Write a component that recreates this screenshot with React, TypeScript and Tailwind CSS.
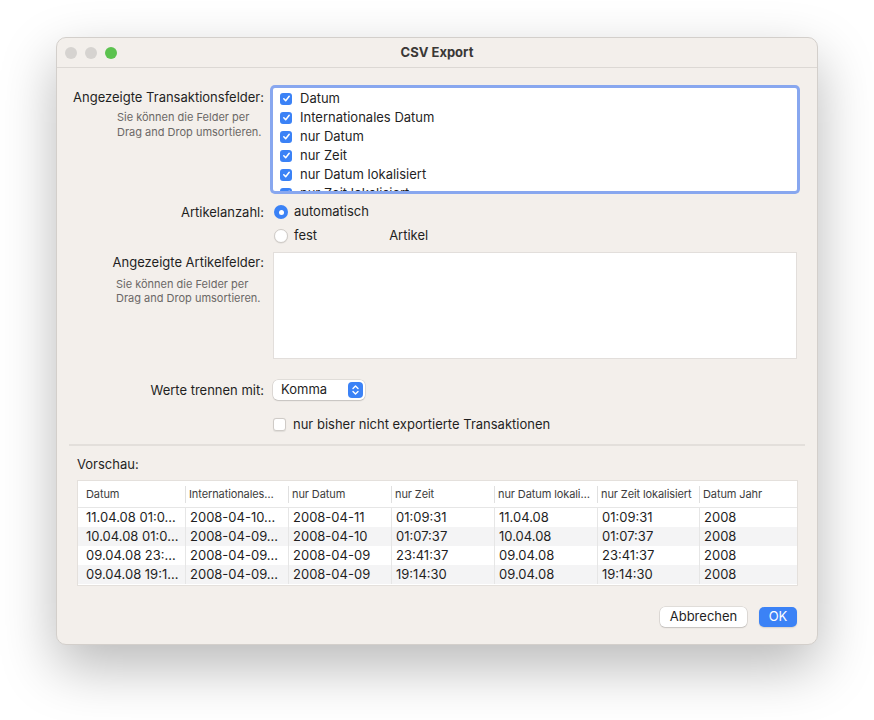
import React from 'react';

const font = { fontFamily: 'Inter, "Noto Sans", "Liberation Sans", sans-serif' };

const fields = [
  'Datum',
  'Internationales Datum',
  'nur Datum',
  'nur Zeit',
  'nur Datum lokalisiert',
  'nur Zeit lokalisiert',
];

// column titles as they appear, already shortened by the table view
const columns = [
  { title: 'Datum', w: 'w-[107px] pl-[8px]' },
  { title: 'Internationales…', w: 'w-[103px] pl-[4px]' },
  { title: 'nur Datum', w: 'w-[103px] pl-[4px]' },
  { title: 'nur Zeit', w: 'w-[103px] pl-[4px]' },
  { title: 'nur Datum lokali…', w: 'w-[103px] pl-[4px]' },
  { title: 'nur Zeit lokalisiert', w: 'w-[102px] pl-[4px]' },
  { title: 'Datum Jahr', w: 'w-[99px] pl-[4px]' },
];

const rows = [
  ['11.04.08 01:0…', '2008-04-10…', '2008-04-11', '01:09:31', '11.04.08', '01:09:31', '2008'],
  ['10.04.08 01:0…', '2008-04-09…', '2008-04-10', '01:07:37', '10.04.08', '01:07:37', '2008'],
  ['09.04.08 23:…', '2008-04-09…', '2008-04-09', '23:41:37', '09.04.08', '23:41:37', '2008'],
  ['09.04.08 19:1…', '2008-04-09…', '2008-04-09', '19:14:30', '09.04.08', '19:14:30', '2008'],
];

function CheckBlue() {
  return (
    <span className="flex h-[12px] w-[12px] shrink-0 items-center justify-center rounded-[3px] bg-[#3b82f6]">
      <svg width="9" height="9" viewBox="0 0 10 10" fill="none">
        <path d="M2 5.3 L4.1 7.4 L8 2.6" stroke="white" strokeWidth="1.7" strokeLinecap="round" strokeLinejoin="round" />
      </svg>
    </span>
  );
}

function Label({ children }: { children: React.ReactNode }) {
  return <div className="flex justify-end whitespace-nowrap leading-[16px]">{children}</div>;
}

export default function App() {
  return (
    <div className="min-h-screen bg-white pl-[56px] pt-[37px] text-[13px] text-[#1f1f1f]" style={font}>
      <div className="flex h-[608px] w-[762px] flex-col overflow-hidden rounded-[10px] border border-[#d3cfcb] bg-[#f3efeb] shadow-[0_22px_55px_rgba(0,0,0,0.28)]">
        {/* title bar */}
        <div className="relative flex h-[30px] shrink-0 items-center border-b border-[#dcd8d4] px-[8px]">
          <div className="flex gap-[8px]">
            <span className="h-[12px] w-[12px] rounded-full bg-[#d6d3d0]" />
            <span className="h-[12px] w-[12px] rounded-full bg-[#d6d3d0]" />
            <span className="h-[12px] w-[12px] rounded-full bg-[#5cc24f]" />
          </div>
          <div className="absolute inset-0 flex items-center justify-center text-[13px] font-bold text-[#3a3836]">
            CSV Export
          </div>
        </div>

        <div className="flex flex-1 flex-col px-[20px] pt-[20px]">
          {/* Transaktionsfelder */}
          <div className="flex gap-[9px]">
            <div className="w-[187px] shrink-0 pt-[1px]">
              <Label>Angezeigte Transaktionsfelder:</Label>
              <div className="mt-[5px] whitespace-nowrap pl-[40px] text-left text-[11px] leading-[15px] text-[#6b6866]">
                Sie können die Felder per
                <br />
                Drag and Drop umsortieren.
              </div>
            </div>
            <div className="h-[103px] w-[525px] overflow-hidden rounded-[2px] bg-white ring-[3px] ring-[#88a7ef]">
              <div className="pt-[1px]">
                {fields.map((f) => (
                  <div key={f} className="flex h-[19px] items-center gap-[8px] pl-[7px]">
                    <CheckBlue />
                    <span>{f}</span>
                  </div>
                ))}
              </div>
            </div>
          </div>

          {/* Artikelanzahl */}
          <div className="mt-[11px] flex gap-[9px]">
            <div className="w-[187px] shrink-0 pt-[2px]">
              <Label>Artikelanzahl:</Label>
            </div>
            <div className="flex flex-col gap-[4px]">
              <div className="flex h-[20px] items-center gap-[6px] pl-[1px]">
                <span className="flex h-[14px] w-[14px] items-center justify-center rounded-full bg-[#3b82f6]">
                  <span className="h-[5px] w-[5px] rounded-full bg-white" />
                </span>
                <span>automatisch</span>
              </div>
              <div className="flex h-[20px] items-center gap-[6px] pl-[1px]">
                <span className="h-[14px] w-[14px] rounded-full border border-[#cfcbc7] bg-white shadow-[0_0.5px_1px_rgba(0,0,0,0.1)]" />
                <span>fest</span>
                <span className="ml-[66px]">Artikel</span>
              </div>
            </div>
          </div>

          {/* Artikelfelder */}
          <div className="mt-[6px] flex gap-[9px]">
            <div className="w-[187px] shrink-0 pt-[2px]">
              <Label>Angezeigte Artikelfelder:</Label>
              <div className="mt-[7px] whitespace-nowrap pl-[39px] text-left text-[11px] leading-[14px] text-[#6b6866]">
                Sie können die Felder per
                <br />
                Drag and Drop umsortieren.
              </div>
            </div>
            <div className="h-[107px] w-[525px] border border-[#e2dedb] bg-white" />
          </div>

          {/* Werte trennen */}
          <div className="mt-[21px] flex items-center gap-[9px]">
            <div className="w-[187px] shrink-0">
              <Label>Werte trennen mit:</Label>
            </div>
            <div className="flex h-[20px] w-[92px] items-center justify-between rounded-[5px] bg-white pl-[8px] pr-[2px] shadow-[0_0_0_0.5px_rgba(0,0,0,0.15),0_1px_1.5px_rgba(0,0,0,0.12)]">
              <span>Komma</span>
              <span className="flex h-[16px] w-[15px] items-center justify-center rounded-[4px] bg-[#3b82f6]">
                <svg width="9" height="12" viewBox="0 0 9 12" fill="none">
                  <path d="M2 4.5 L4.5 2 L7 4.5" stroke="white" strokeWidth="1.4" strokeLinecap="round" strokeLinejoin="round" />
                  <path d="M2 7.5 L4.5 10 L7 7.5" stroke="white" strokeWidth="1.4" strokeLinecap="round" strokeLinejoin="round" />
                </svg>
              </span>
            </div>
          </div>

          {/* nur bisher */}
          <div className="mt-[15px] flex items-center gap-[7px] pl-[196px]">
            <span className="h-[13px] w-[13px] rounded-[3px] border border-[#cfcbc7] bg-white shadow-[0_0.5px_1px_rgba(0,0,0,0.08)]" />
            <span>nur bisher nicht exportierte Transaktionen</span>
          </div>

          <div className="-mx-[8px] mt-[9px] h-[2px] bg-[#e3dfdb]" />

          <div className="mt-[10px] leading-[16px]">Vorschau:</div>

          {/* Vorschau table */}
          <div className="mt-[8px] w-[721px] border border-[#e4e0dc] bg-white pb-[1px]">
            <div className="flex h-[27px] items-center border-b border-[#e6e6e6] text-[11px] text-[#3d3d3d]">
              {columns.map((c, i) => (
                <div key={c.title} className={`${c.w} relative h-full shrink-0 overflow-hidden whitespace-nowrap leading-[27px] tracking-[-0.1px]`}>
                  {i > 0 && <span className="absolute left-0 top-[5px] h-[17px] w-px bg-[#e0e0e0]" />}
                  {c.title}
                </div>
              ))}
            </div>
            {rows.map((r, ri) => (
              <div key={ri} className={`flex h-[19px] ${ri % 2 === 1 ? 'bg-[#f4f4f5]' : 'bg-white'}`}>
                {r.map((cell, ci) => (
                  <div
                    key={ci}
                    className={`${columns[ci].w} h-full shrink-0 overflow-hidden whitespace-nowrap leading-[19px] ${ci > 0 ? 'border-l border-[#e6e6e6]' : ''}`}
                  >
                    {cell}
                  </div>
                ))}
              </div>
            ))}
          </div>

          <div className="mt-[21px] flex justify-end gap-[12px]">
            <button className="h-[20px] w-[87px] rounded-[5px] bg-white text-[13px] shadow-[0_0_0_0.5px_rgba(0,0,0,0.15),0_1px_1.5px_rgba(0,0,0,0.12)]">
              Abbrechen
            </button>
            <button className="h-[20px] w-[38px] rounded-[5px] bg-[#3b82f6] text-[13px] text-white shadow-[0_1px_1.5px_rgba(0,0,0,0.12)]">
              OK
            </button>
          </div>
        </div>
      </div>
    </div>
  );
}
